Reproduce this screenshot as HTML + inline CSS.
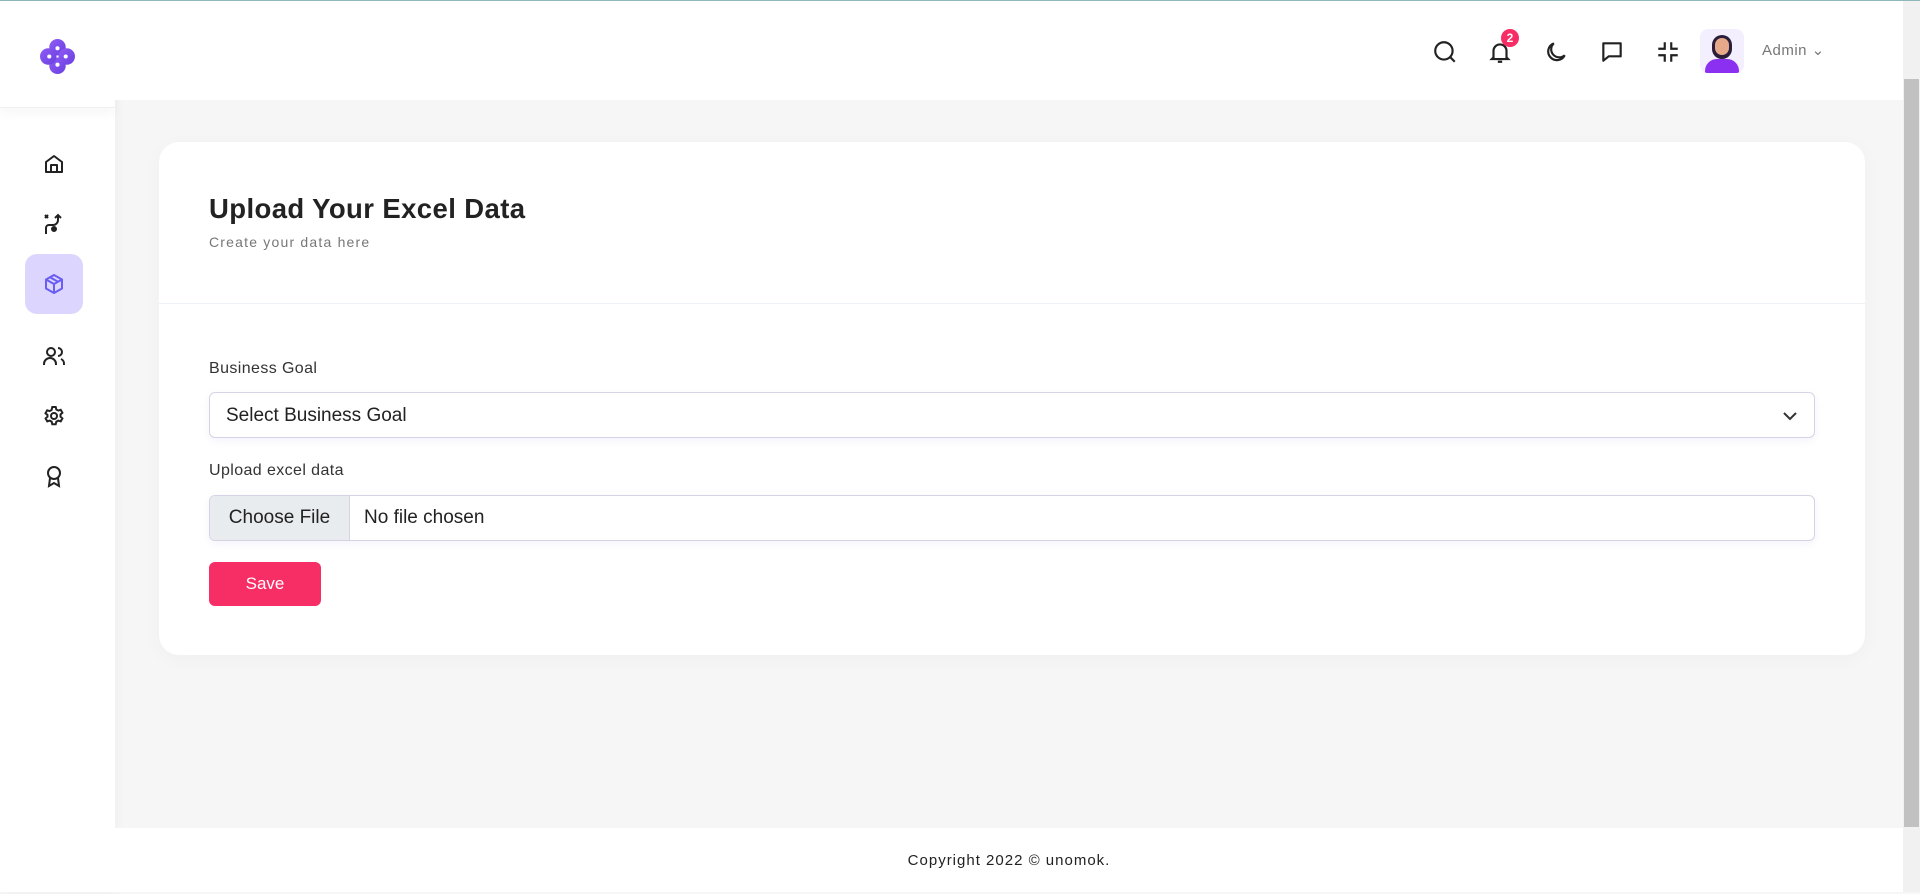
<!DOCTYPE html>
<html><head><meta charset="utf-8"><style>
*{box-sizing:border-box;margin:0;padding:0}
body{width:1920px;height:892px;overflow:hidden;background:#f6f6f6;font-family:"Liberation Sans",sans-serif;position:relative;color:#222}
.top{position:absolute;left:0;top:0;width:1920px;height:1px;background:#8fb8bb}
.side{position:absolute;left:0;top:1px;width:115px;height:891px;background:#fff;box-shadow:0 0 12px rgba(0,0,0,.04)}
.side .logo{height:107px;border-bottom:1px solid #f0f0f0;box-shadow:0 6px 10px rgba(0,0,0,.03)}
.ic{position:absolute;left:42px;width:24px;height:24px}
.act{position:absolute;left:25px;top:253px;width:58px;height:60px;background:#dcd6fe;border-radius:12px}
.hdr{position:absolute;left:115px;top:1px;width:1788px;height:99px;background:#fff}
.hi{position:absolute;top:38px;width:26px;height:26px}
.scroll{position:absolute;right:0;top:1px;width:17px;height:891px;background:#f1f1f1}
.thumb{position:absolute;right:1px;top:78px;width:15px;height:748px;background:#c1c1c1}
.card{position:absolute;left:159px;top:142px;width:1706px;height:513px;background:#fff;border-radius:20px;box-shadow:0 4px 20px rgba(0,0,0,.03)}
h1{position:absolute;left:50px;top:51px;font-size:27.5px;font-weight:bold;color:#222;letter-spacing:.4px}
.sub{position:absolute;left:50px;top:92px;font-size:14px;color:#777;letter-spacing:1.2px}
.div{position:absolute;left:0;top:161px;width:100%;height:1px;background:#eef1f6}
.lbl{position:absolute;left:50px;font-size:16px;color:#333;letter-spacing:.4px}
.inp{position:absolute;left:50px;width:1606px;height:46px;border:1px solid #d6d4e4;border-radius:6px;font-size:19px;color:#222;box-shadow:0 3px 8px rgba(120,110,220,.08);background:#fff}
.save{position:absolute;left:50px;top:420px;width:112px;height:44px;background:#f72d66;border-radius:6px;color:#fff;font-size:17px;text-align:center;line-height:44px}
.foot{position:absolute;left:115px;top:828px;width:1788px;height:64px;background:#fff;text-align:center;font-size:15px;line-height:66px;letter-spacing:1px;color:#222}
</style></head><body>
<div class="top"></div>
<div class="side"><div class="logo"><svg style="position:absolute;left:39px;top:37px" width="37" height="37" viewBox="0 0 36 36"><defs><linearGradient id="g" x1="0" y1="0" x2="1" y2="1"><stop offset="0" stop-color="#8f5cf5"/><stop offset="1" stop-color="#6a3fe0"/></linearGradient></defs><circle cx="18" cy="9" r="8" fill="url(#g)"/><circle cx="18" cy="27" r="8" fill="url(#g)"/><circle cx="9" cy="18" r="8" fill="url(#g)"/><circle cx="27" cy="18" r="8" fill="url(#g)"/><circle cx="18" cy="10" r="2" fill="#fff"/><circle cx="18" cy="26" r="2" fill="#fff"/><circle cx="10" cy="18" r="2" fill="#fff"/><circle cx="26" cy="18" r="2" fill="#fff"/></svg></div>
<div class="act"></div>
<svg class="ic" style="top:151px" viewBox="0 0 24 24" fill="none" stroke="#222" stroke-width="2" stroke-linejoin="round"><path d="M4 10l8-6 8 6v10H4z"/><path d="M9 20v-7h6v7"/></svg>
<svg class="ic" style="top:211px" viewBox="0 0 24 24" fill="none" stroke="#222" stroke-width="2"><path d="M3 3l3 3M6 3L3 6"/><path d="M4 22v-6a3 3 0 0 1 3-3h4a5 5 0 0 0 5-5V3M13 6l3-3 3 3"/><circle cx="12" cy="17" r="2" fill="#222"/></svg>
<svg class="ic" style="top:271px" viewBox="0 0 24 24" fill="none" stroke="#6a5cf5" stroke-width="2" stroke-linejoin="round"><path d="M12 3l8 4.5v9L12 21l-8-4.5v-9z"/><path d="M4 7.5l8 4.5 8-4.5M12 12v9M8 5.2l8 4.5"/></svg>
<svg class="ic" style="top:343px" viewBox="0 0 24 24" fill="none" stroke="#222" stroke-width="2"><circle cx="9" cy="8" r="4"/><path d="M2 21v-1a6 6 0 0 1 12 0v1M16 4a4 4 0 0 1 0 8M19 15a5 5 0 0 1 3 5v1"/></svg>
<svg class="ic" style="top:403px" viewBox="0 0 24 24" fill="none" stroke="#222" stroke-width="2"><circle cx="12" cy="12" r="3"/><path d="M10.3 3h3.4l.6 2.5 2 1.1 2.4-.8 1.7 3-1.9 1.7v2.2l1.9 1.7-1.7 3-2.4-.8-2 1.1-.6 2.5h-3.4l-.6-2.5-2-1.1-2.4.8-1.7-3 1.9-1.7V11L3.5 9.3l1.7-3 2.4.8 2-1.1z"/></svg>
<svg class="ic" style="top:463px" viewBox="0 0 24 24" fill="none" stroke="#222" stroke-width="2"><circle cx="12" cy="9" r="6"/><path d="M8 14l-1 8 5-3 5 3-1-8"/></svg>
</div>
<div class="hdr">
<svg class="hi" style="left:1317px" viewBox="0 0 24 24" fill="none" stroke="#222" stroke-width="2"><circle cx="11" cy="11" r="8"/><path d="M17 17l4 4"/></svg>
<svg class="hi" style="left:1372px" viewBox="0 0 24 24" fill="none" stroke="#222" stroke-width="2"><path d="M6 17V11a6 6 0 0 1 12 0v6l1.5 1.5h-15z M10 21h4"/></svg>
<div style="position:absolute;left:1386px;top:28px;width:18px;height:18px;border-radius:50%;background:#f72d66;color:#fff;font-size:12px;font-weight:bold;text-align:center;line-height:18px">2</div>
<svg class="hi" style="left:1428px" viewBox="0 0 24 24" fill="none" stroke="#222" stroke-width="2"><path d="M20 15A8 8 0 1 1 10 4a7 7 0 0 0 10 11z"/></svg>
<svg class="hi" style="left:1484px" viewBox="0 0 24 24" fill="none" stroke="#222" stroke-width="2" stroke-linejoin="round"><path d="M4 4h16v12H9l-5 4z"/></svg>
<svg class="hi" style="left:1540px" viewBox="0 0 24 24" fill="none" stroke="#222" stroke-width="2"><path d="M9 3v6H3M15 3v6h6M9 21v-6H3M15 21v-6h6"/></svg>
<div style="position:absolute;left:1585px;top:28px;width:44px;height:44px;border-radius:8px;background:#f3effe;overflow:hidden"><div style="position:absolute;left:12px;top:6px;width:20px;height:24px;border-radius:10px;background:#2a1e3a"></div><div style="position:absolute;left:15px;top:9px;width:14px;height:17px;border-radius:7px;background:#e8a98a"></div><div style="position:absolute;left:5px;top:30px;width:34px;height:20px;border-radius:12px 12px 0 0;background:#8b2ff0"></div></div>
<div style="position:absolute;left:1647px;top:40px;font-size:15px;color:#777;letter-spacing:.5px">Admin ⌄</div>
</div>
<div class="scroll"><div class="thumb"></div></div>
<div class="card">
<h1>Upload Your Excel Data</h1>
<div class="sub">Create your data here</div>
<div class="div"></div>
<div class="lbl" style="top:218px">Business Goal</div>
<div class="inp" style="top:250px;padding-left:16px;line-height:46px">Select Business Goal<svg style="position:absolute;right:16px;top:15px" width="16" height="16" viewBox="0 0 16 16" fill="none" stroke="#333" stroke-width="2"><path d="M2 5l6 6 6-6"/></svg></div>
<div class="lbl" style="top:320px">Upload excel data</div>
<div class="inp" style="top:353px;line-height:44px;overflow:hidden"><span style="display:inline-block;width:140px;height:44px;background:#e9ecef;border-right:1px solid #d6d4e4;text-align:center">Choose File</span><span style="padding-left:14px">No file chosen</span></div>
<div class="save">Save</div>
</div>
<div class="foot">Copyright 2022 © unomok.</div>
</body></html>
